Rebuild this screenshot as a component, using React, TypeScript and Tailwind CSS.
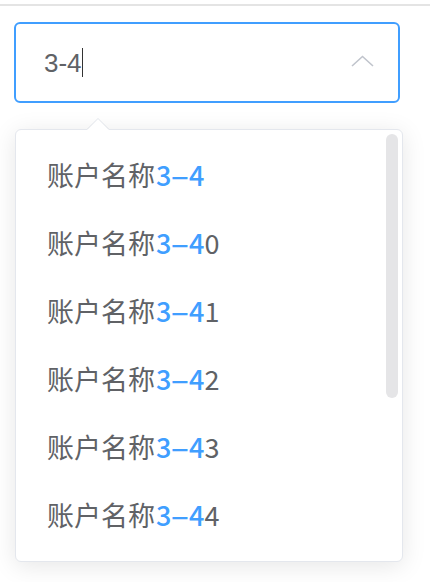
const items = ["", "0", "1", "2", "3", "4"];

function ChevronUp() {
  return (
    <svg width="23" height="12" viewBox="0 0 23 12" fill="none">
      <path d="M1 11 L11.5 1.5 L22 11" stroke="#c0c4cc" strokeWidth="1.6" />
    </svg>
  );
}

function Option({ rest }: { rest: string }) {
  return (
    <li className="flex h-[68px] items-center pl-[31px] text-[27px] text-[#606266]">
      <span>账户名称</span>
      <span className="ml-[1px] font-medium text-[#409eff]">
        3<span className="mx-[4px] inline-block scale-x-[2.1]">-</span>4
      </span>
      <span>{rest}</span>
    </li>
  );
}

export default function App() {
  return (
    <div
      className="h-[582px] w-[430px] overflow-hidden bg-white"
      style={{ fontFamily: '"Liberation Sans", "Noto Sans CJK SC", sans-serif' }}
    >
      <div className="mt-[4px] h-[2px] bg-[#e4e4e4]" />
      <div className="ml-[14px] mt-[16px] flex h-[81px] w-[386px] items-center rounded-[6px] border-2 border-[#409eff] pl-[28px] pr-[24px]">
        <span className="text-[26px] leading-none text-[#606266]">3-4</span>
        <span className="h-[29px] w-[1.5px] bg-[#333]" />
        <span className="ml-auto mt-[-4px]">
          <ChevronUp />
        </span>
      </div>
      <div className="relative ml-[15px] mt-[26px] w-[388px]">
        <div className="absolute left-[71px] top-[-11px] h-0 w-0 border-x-[12px] border-b-[12px] border-x-transparent border-b-[#e4e7ed]" />
        <div className="absolute left-[72px] top-[-10px] z-10 h-0 w-0 border-x-[11px] border-b-[11px] border-x-transparent border-b-white" />
        <div
          className="relative h-[433px] rounded-[6px] border border-[#e4e7ed] bg-white py-[11px] shadow-[0_4px_24px_rgba(0,0,0,0.1)]"
          style={{ fontFamily: '"Noto Sans CJK SC", sans-serif' }}
        >
          <ul>
            {items.map((r) => (
              <Option key={r} rest={r} />
            ))}
          </ul>
          <div className="absolute right-[4px] top-[4px] h-[264px] w-[12px] rounded-full bg-[#e5e5e7]" />
        </div>
      </div>
    </div>
  );
}
